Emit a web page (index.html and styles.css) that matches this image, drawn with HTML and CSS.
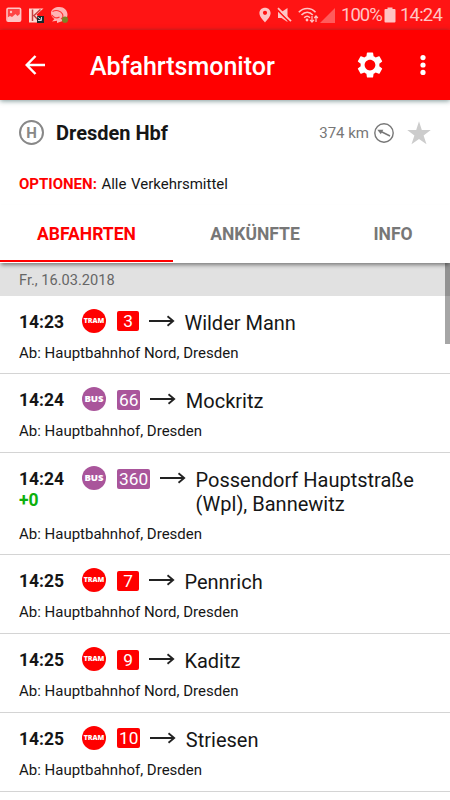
FILE: index.html
```html
<!DOCTYPE html>
<html lang="de">
<head>
  <meta charset="UTF-8" />
  <meta name="viewport" content="width=device-width, initial-scale=1" />
  <title>Abfahrtsmonitor</title>
  <link rel="stylesheet" href="styles.css">
</head>
<body>

  <svg class="defs" width="0" height="0">
    <symbol id="arrow" viewBox="0 0 26 12">
      <path d="M0 6H24M18.5 1.2L24.2 6L18.5 10.8" fill="none" stroke="#222" stroke-width="1.8" />
    </symbol>
  </svg>

  <div class="status-bar">
    <div class="notifications">
      <svg width="16" height="16" viewBox="0 0 16 16">
        <rect x="1" y="1.2" width="13.6" height="13" rx="1.2" fill="#ff4444" stroke="#ffc4c4" stroke-width="1.6" />
        <circle cx="5" cy="5" r="1.2" fill="#ffc4c4" />
        <path d="M1.5 10.5L4 9L6 10L9.5 7L11.5 9L14 7V14H1.5z" fill="#ffc4c4" />
      </svg>
      <svg width="17" height="17" viewBox="0 0 17 17">
        <path d="M1 1.5H15.5L8.5 7.5L15 15.5H1z" fill="#ffd6d0" />
        <path d="M4.5 2.5V14M12.5 2.5L6 8.5L11 14" stroke="#c84040" stroke-width="1.5" fill="none" />
        <rect x="9" y="9" width="7" height="7" fill="#182a2a" />
        <path d="M9.5 10L13 12.5M13.5 10V13.5H10" stroke="#ccd" fill="none" />
      </svg>
      <svg class="chat" width="19" height="18" viewBox="0 0 19 18">
        <path d="M9.5 1C14 1 17.5 4.5 17.5 8.5C17.5 11.5 15.5 14.5 12 15.2L7 17V14.8L2 15.5L4.5 13C2 11.5 1 9 1 6.5C1.5 3 5 1 9.5 1z" fill="#ffb4b4" />
        <path d="M2.5 5.5C6 3.5 10.5 4.5 12.5 8C13.3 10 12.5 12 11 13M2 9C3.5 12 7 12.5 9.5 11" fill="none" stroke="#f33" stroke-width="1.1" />
        <circle cx="15" cy="13.7" r="3.1" fill="#7c8428" />
      </svg>
    </div>
    <div class="system">
      <svg class="pin" width="12" height="16" viewBox="0 0 12 16">
        <path fill-rule="evenodd" d="M6 .8C2.9.8.4 3 .4 6.1C.4 9.5 3.5 12.8 6 15.4C8.5 12.8 11.6 9.5 11.6 6.1C11.6 3 9.1.8 6 .8zM6 3.7A2.1 2.1 0 1 1 6 7.9A2.1 2.1 0 1 1 6 3.7z" fill="#ffc4c4" />
      </svg>
      <svg class="mute" width="15" height="16" viewBox="0 0 15 16">
        <path d="M1 5H4.5L10.5 1V15L4.5 11H1z" fill="#ffc4c4" />
        <path d="M0 2.5L12.5 15" stroke="#ff1414" stroke-width="1.6" />
        <path d="M1 1.2L14 14.2" stroke="#ffc4c4" stroke-width="1.7" />
      </svg>
      <svg class="wifi" width="21" height="16" viewBox="0 0 21 16">
        <g fill="none" stroke="#ffc4c4" stroke-width="1.6">
          <path d="M.8 5.2C5.5.3 13 .3 17.5 5.2M3.5 8C7 4.3 11.5 4.3 14.8 8M6.2 10.8C8.2 8.8 10 8.8 12 10.8" />
        </g>
        <circle cx="9" cy="13" r="1.4" fill="#ffc4c4" />
        <path d="M14 9V15M12 12.8L14 15L16 12.8M18 15V9M16.3 11L18 9L19.9 11" fill="none" stroke="#ffc4c4" stroke-width="1.2" />
      </svg>
      <svg class="signal" width="15" height="15" viewBox="0 0 15 15">
        <path d="M15 0V15H0z" fill="#ff5b5b" />
      </svg>
      <span class="percent">100%</span>
      <svg class="battery" width="12" height="16" viewBox="0 0 12 16">
        <path d="M3.5.5H8.5V2H10.5Q11.5 2 11.5 3V14.5Q11.5 15.5 10.5 15.5H1.5Q.5 15.5.5 14.5V3Q.5 2 1.5 2H3.5z" fill="#ffc4c4" />
      </svg>
      <span class="clock">14:24</span>
    </div>
  </div>

  <header class="app-bar">
    <svg class="back" width="20" height="20" viewBox="0 0 20 20">
      <path d="M20 10H2M10.5 1L1.7 10L10.5 19" fill="none" stroke="#fff" stroke-width="2.5" />
    </svg>
    <h1>Abfahrtsmonitor</h1>
    <svg class="gear" width="30" height="30" viewBox="0 0 24 24">
      <path fill="#fff" d="M19.43 12.98c.04-.32.07-.64.07-.98s-.03-.66-.07-.98l2.11-1.65c.19-.15.24-.42.12-.64l-2-3.46c-.12-.22-.39-.3-.61-.22l-2.49 1c-.52-.4-1.08-.73-1.69-.98l-.38-2.65C14.46 2.18 14.25 2 14 2h-4c-.25 0-.46.18-.49.42l-.38 2.65c-.61.25-1.17.59-1.69.98l-2.49-1c-.23-.09-.49 0-.61.22l-2 3.46c-.13.22-.07.49.12.64l2.11 1.65c-.04.32-.07.65-.07.98s.03.66.07.98l-2.11 1.65c-.19.15-.24.42-.12.64l2 3.46c.12.22.39.3.61.22l2.49-1c.52.4 1.08.73 1.69.98l.38 2.65c.03.24.24.42.49.42h4c.25 0 .46-.18.49-.42l.38-2.65c.61-.25 1.17-.59 1.69-.98l2.49 1c.23.09.49 0 .61-.22l2-3.46c.12-.22.07-.49-.12-.64l-2.11-1.65zM12 16.3c-2.37 0-4.3-1.93-4.3-4.3s1.93-4.3 4.3-4.3 4.3 1.93 4.3 4.3-1.93 4.3-4.3 4.3z" />
    </svg>
    <svg class="more" width="6" height="20" viewBox="0 0 6 20">
      <g fill="#fff">
        <circle cx="3" cy="2.6" r="2.6" />
        <circle cx="3" cy="10" r="2.6" />
        <circle cx="3" cy="17.4" r="2.6" />
      </g>
    </svg>
  </header>

  <section class="station">
    <div class="station-row">
      <span class="stop-icon">H</span>
      <h2>Dresden Hbf</h2>
      <span class="distance">374 km</span>
      <svg class="compass" width="20" height="20" viewBox="0 0 20 20">
        <circle cx="10" cy="10" r="9.2" fill="none" stroke="#777" stroke-width="1.4" />
        <path d="M16 13L6 8" stroke="#777" stroke-width="1.4" />
        <path d="M3.3 6.8L9.3 6.7L6.8 11.2z" fill="#777" />
      </svg>
      <svg class="star" width="24" height="24" viewBox="0 0 24 24">
        <path d="M12 .3L14.8 9H23.8L16.6 14.5L19.5 23.3L12 18L4.5 23.3L7.4 14.5L.2 9H9.2z" fill="#ccc" />
      </svg>
    </div>
    <div class="options"><strong>OPTIONEN:</strong> Alle Verkehrsmittel</div>
  </section>

  <nav class="tabs">
    <div class="tab active">ABFAHRTEN</div>
    <div class="tab">ANKÜNFTE</div>
    <div class="tab">INFO</div>
  </nav>

  <main class="list">
    <div class="scrollbar"></div>
    <div class="date">Fr., 16.03.2018</div>

    <div class="departure">
      <div class="line">
        <div class="time">14:23</div>
        <span class="type tram">TRAM</span>
        <span class="number tram">3</span>
        <svg class="arrow"><use href="#arrow" /></svg>
        <div class="destination">Wilder Mann</div>
      </div>
      <div class="from">Ab: Hauptbahnhof Nord, Dresden</div>
    </div>

    <div class="departure">
      <div class="line">
        <div class="time">14:24</div>
        <span class="type bus">BUS</span>
        <span class="number bus">66</span>
        <svg class="arrow"><use href="#arrow" /></svg>
        <div class="destination">Mockritz</div>
      </div>
      <div class="from">Ab: Hauptbahnhof, Dresden</div>
    </div>

    <div class="departure">
      <div class="line">
        <div class="time">14:24<div class="delay">+0</div></div>
        <span class="type bus">BUS</span>
        <span class="number bus">360</span>
        <svg class="arrow"><use href="#arrow" /></svg>
        <div class="destination">Possendorf Hauptstraße (Wpl), Bannewitz</div>
      </div>
      <div class="from">Ab: Hauptbahnhof, Dresden</div>
    </div>

    <div class="departure">
      <div class="line">
        <div class="time">14:25</div>
        <span class="type tram">TRAM</span>
        <span class="number tram">7</span>
        <svg class="arrow"><use href="#arrow" /></svg>
        <div class="destination">Pennrich</div>
      </div>
      <div class="from">Ab: Hauptbahnhof Nord, Dresden</div>
    </div>

    <div class="departure">
      <div class="line">
        <div class="time">14:25</div>
        <span class="type tram">TRAM</span>
        <span class="number tram">9</span>
        <svg class="arrow"><use href="#arrow" /></svg>
        <div class="destination">Kaditz</div>
      </div>
      <div class="from">Ab: Hauptbahnhof Nord, Dresden</div>
    </div>

    <div class="departure">
      <div class="line">
        <div class="time">14:25</div>
        <span class="type tram">TRAM</span>
        <span class="number tram">10</span>
        <svg class="arrow"><use href="#arrow" /></svg>
        <div class="destination">Striesen</div>
      </div>
      <div class="from">Ab: Hauptbahnhof, Dresden</div>
    </div>
  </main>

</body>
</html>
```
FILE: styles.css
```css
:root {
  --red: #ff0000;
  --bus: #a9559b;
  --text: #161616;
  --grey: #777;
  --status: #ffc4c4;
}

* {
  box-sizing: border-box;
}

body {
  margin: 0;
  height: 800px;
  overflow: hidden;
  display: flex;
  flex-direction: column;
  background: #fff;
  color: var(--text);
  font-family: Roboto, sans-serif;
}

svg {
  display: block;
  flex: none;
}

.defs {
  position: absolute;
}

.status-bar {
  height: 30px;
  flex: none;
  display: flex;
  justify-content: space-between;
  align-items: center;
  padding: 0 8px 0 6px;
  background: #ff1414;
  color: var(--status);
  font-size: 18.5px;
}

.notifications,
.system {
  display: flex;
  align-items: center;
}

.notifications {
  gap: 6px;
}

.chat {
  margin-left: -1px;
}

.mute {
  margin-left: 6px;
}

.wifi {
  margin-left: 6px;
}

.signal {
  margin-left: 1px;
}

.percent {
  margin-left: 6px;
  width: 40px;
  white-space: nowrap;
  letter-spacing: -1px;
}

.battery {
  margin-left: 3px;
}

.clock {
  margin-left: 4px;
  width: 42px;
  white-space: nowrap;
  letter-spacing: -0.8px;
}

.app-bar {
  height: 70px;
  flex: none;
  display: flex;
  align-items: center;
  padding: 0 24.5px 0 25px;
  background: var(--red);
  color: #fff;
  box-shadow: 0 1px 5px rgba(0, 50, 50, 0.5);
}

.app-bar h1 {
  margin: 3px 0 0 45px;
  flex: 1;
  font-size: 25px;
  font-weight: 500;
}

.more {
  margin-left: 35px;
}

.station {
  height: 105px;
  flex: none;
  padding: 20px 19px 0;
}

.station-row {
  height: 25px;
  display: flex;
  align-items: center;
}

.stop-icon {
  width: 25px;
  height: 25px;
  border: 2px solid #888;
  border-radius: 50%;
  color: #888;
  font-size: 15px;
  line-height: 22px;
  font-weight: 700;
  text-align: center;
}

.station h2 {
  margin: 1px 0 0 12px;
  flex: 1;
  font-size: 20px;
  font-weight: 700;
}

.distance {
  color: var(--grey);
  font-size: 15px;
}

.compass {
  margin-left: 5px;
}

.star {
  margin-left: 13px;
}

.options {
  margin-top: 30px;
  font-size: 15px;
  line-height: 18px;
  word-spacing: 0.8px;
}

.options strong {
  color: var(--red);
  font-weight: 700;
}

.tabs {
  height: 58px;
  flex: none;
  position: relative;
  display: flex;
  background: #fff;
  box-shadow: 0 3px 4px -1px rgba(0, 0, 0, 0.45);
  z-index: 1;
}

.tab {
  width: 164px;
  height: 57px;
  line-height: 58px;
  color: var(--grey);
  font-size: 17.5px;
  font-weight: 700;
  text-align: center;
}

.tab.active {
  width: 173px;
  color: var(--red);
  border-bottom: 2px solid var(--red);
}

.tab:last-child {
  width: 112px;
}

.list {
  flex: 1;
  position: relative;
}

.scrollbar {
  position: absolute;
  top: 0;
  right: 0;
  width: 5px;
  height: 81px;
  background: rgba(0, 0, 0, 0.35);
}

.date {
  height: 32.6px;
  padding-left: 19px;
  background: #e1e1e1;
  color: #666;
  font-size: 14.6px;
  line-height: 34px;
}

.departure {
  min-height: 78.75px;
  padding: 13px 19px 11.4px;
  border-bottom: 1px solid #d4d4d4;
}

.line {
  display: flex;
  align-items: flex-start;
}

.time {
  width: 63px;
  margin-top: 3px;
  font-size: 17.5px;
  line-height: 20.5px;
  font-weight: 700;
}

.delay {
  color: #0db00d;
}

.type {
  width: 24px;
  height: 24px;
  border-radius: 50%;
  color: #fff;
  font-family: "Open Sans", sans-serif;
  font-size: 9.5px;
  line-height: 24px;
  font-weight: 800;
  text-align: center;
}

.type.tram {
  font-size: 7px;
}

.tram {
  background: var(--red);
}

.bus {
  background: var(--bus);
}

.number {
  min-width: 22px;
  height: 20px;
  margin: 2.5px 0 0 11px;
  padding: 0 2px;
  border-radius: 2px;
  color: #fff;
  font-size: 17.3px;
  line-height: 20px;
  text-align: center;
}

.arrow {
  width: 26px;
  height: 12px;
  margin: 6px 0 0 10px;
}

.destination {
  flex: 1;
  margin: 2px 0 0 9.4px;
  font-size: 20px;
  line-height: 24px;
}

.from {
  margin-top: 9px;
  font-size: 15px;
  line-height: 18px;
}
```
